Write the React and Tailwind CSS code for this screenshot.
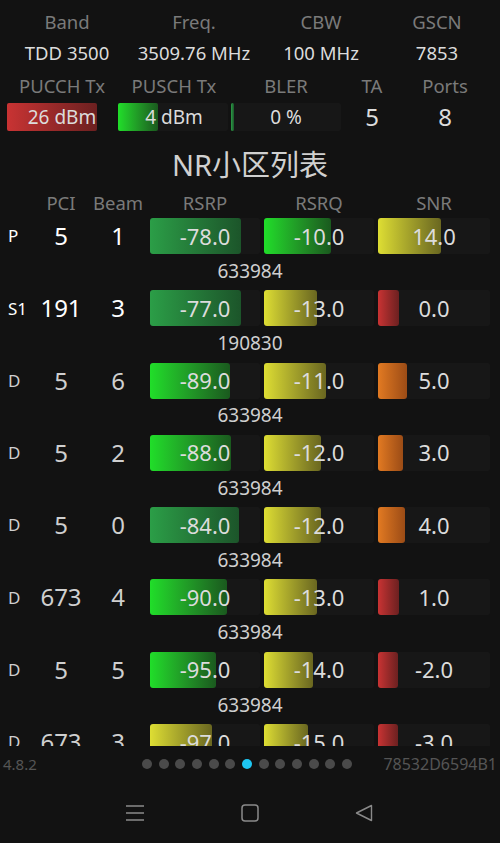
import React from 'react';

const FONT = { fontFamily: '"Noto Sans", "Noto Sans CJK SC", sans-serif' };

const FILLS = {
  dg: 'bg-gradient-to-r from-[#2b9e47] to-[#1c552a]',
  bg: 'bg-gradient-to-r from-[#20de29] to-[#1a5a1e]',
  ye: 'bg-gradient-to-r from-[#dede33] to-[#6a6720]',
  or: 'bg-gradient-to-r from-[#e27a22] to-[#9c4c16]',
  rd: 'bg-gradient-to-r from-[#c93333] to-[#6c2020]',
};

const cells = [
  { tag: 'P', pci: '5', beam: '1', bright: true, rsrp: ['-78.0', 91, 'dg'], rsrq: ['-10.0', 67, 'bg'], snr: ['14.0', 63, 'ye'], id: '633984' },
  { tag: 'S1', pci: '191', beam: '3', bright: true, rsrp: ['-77.0', 91, 'dg'], rsrq: ['-13.0', 53, 'ye'], snr: ['0.0', 21, 'rd'], id: '190830' },
  { tag: 'D', pci: '5', beam: '6', rsrp: ['-89.0', 80, 'bg'], rsrq: ['-11.0', 62, 'ye'], snr: ['5.0', 29, 'or'], id: '633984' },
  { tag: 'D', pci: '5', beam: '2', rsrp: ['-88.0', 81, 'bg'], rsrq: ['-12.0', 57, 'ye'], snr: ['3.0', 25, 'or'], id: '633984' },
  { tag: 'D', pci: '5', beam: '0', rsrp: ['-84.0', 89, 'dg'], rsrq: ['-12.0', 57, 'ye'], snr: ['4.0', 27, 'or'], id: '633984' },
  { tag: 'D', pci: '673', beam: '4', rsrp: ['-90.0', 77, 'bg'], rsrq: ['-13.0', 53, 'ye'], snr: ['1.0', 21, 'rd'], id: '633984' },
  { tag: 'D', pci: '5', beam: '5', rsrp: ['-95.0', 66, 'bg'], rsrq: ['-14.0', 49, 'ye'], snr: ['-2.0', 20, 'rd'], id: '633984' },
  { tag: 'D', pci: '673', beam: '3', rsrp: ['-97.0', 62, 'ye'], rsrq: ['-15.0', 44, 'ye'], snr: ['-3.0', 20, 'rd'], id: '633984' },
];

function Meter({ value, width, kind, className = 'w-[110px]' }) {
  return (
    <div className={`relative h-[36px] ${className} bg-[#171717] rounded-[2px]`}>
      <div className={`absolute left-0 top-0 bottom-0 rounded-[3px] ${FILLS[kind]}`} style={{ width }} />
      <span className="absolute inset-0 flex items-center justify-center text-[22px] text-[#dcdcdc]">{value}</span>
    </div>
  );
}

function CellRow({ c }) {
  const txt = c.bright ? 'text-white' : 'text-[#cfcfcf]';
  return (
    <div className="h-[72.3px] flex flex-col">
      <div className="flex items-center h-[36px]">
        <div className={`w-[36px] pl-[8px] text-[17px] ${txt}`}>{c.tag}</div>
        <div className={`w-[50px] text-center text-[24px] ${txt}`}>{c.pci}</div>
        <div className={`w-[64px] text-center text-[24px] ${txt}`}>{c.beam}</div>
        <Meter value={c.rsrp[0]} width={c.rsrp[1]} kind={c.rsrp[2]} />
        <div className="w-[4px]" />
        <Meter value={c.rsrq[0]} width={c.rsrq[1]} kind={c.rsrq[2]} />
        <div className="w-[4px]" />
        <Meter value={c.snr[0]} width={c.snr[1]} kind={c.snr[2]} className="w-[112px]" />
      </div>
      <div className="h-[34px] flex items-center justify-center text-[19px] text-[#cfcfcf]">{c.id}</div>
    </div>
  );
}

function TxCell({ fill, kind, value, barClass, colClass }) {
  return (
    <div className={`relative h-[28px] ${colClass}`}>
      <div className={`absolute top-0 bottom-0 bg-[#171717] rounded-[2px] ${barClass}`}>
        <div className={`absolute left-0 top-0 bottom-0 rounded-[2px] ${FILLS[kind]}`} style={{ width: fill }} />
      </div>
      <span className="absolute inset-0 flex items-center justify-center text-[19px] text-[#dcdcdc]">{value}</span>
    </div>
  );
}

export default function App() {
  return (
    <div className="w-[500px] h-[843px] bg-[#121212] flex flex-col overflow-hidden select-none" style={FONT}>
      <div className="h-[746px] overflow-hidden pt-[10px]">
        <div className="grid grid-cols-[134px_120px_134px_98px] text-center text-[18.5px] leading-[24px] text-[#7a7a7a]">
          <div>Band</div>
          <div>Freq.</div>
          <div>CBW</div>
          <div>GSCN</div>
        </div>
        <div className="grid grid-cols-[134px_120px_134px_98px] text-center text-[18.5px] leading-[24px] text-[#dcdcdc] mt-[7px]">
          <div>TDD 3500</div>
          <div>3509.76 MHz</div>
          <div>100 MHz</div>
          <div>7853</div>
        </div>
        <div className="grid grid-cols-[124px_100px_124px_48px_98px] text-center text-[18.5px] leading-[24px] text-[#7a7a7a] mt-[9px]">
          <div>PUCCH Tx</div>
          <div>PUSCH Tx</div>
          <div>BLER</div>
          <div>TA</div>
          <div>Ports</div>
        </div>
        <div className="flex items-center h-[28px] mt-[5px]">
          <TxCell fill={90} kind="rd" value="26 dBm" colClass="w-[124px]" barClass="left-[7px] w-[90px]" />
          <TxCell fill={40} kind="bg" value="4 dBm" colClass="w-[100px]" barClass="left-[-6px] w-[110px]" />
          <TxCell fill={3} kind="dg" value="0 %" colClass="w-[124px]" barClass="left-[7px] w-[110px]" />
          <div className="w-[48px] text-center text-[24px] leading-none text-[#dcdcdc]">5</div>
          <div className="w-[98px] text-center text-[24px] leading-none text-[#dcdcdc]">8</div>
        </div>
        <div className="text-center text-[29px] leading-[34px] text-[#d0d0d0] mt-[17px]">NR小区列表</div>
        <div className="flex text-[18.5px] leading-[24px] text-[#7a7a7a] mt-[9px]">
          <div className="w-[36px]" />
          <div className="w-[50px] text-center">PCI</div>
          <div className="w-[64px] text-center">Beam</div>
          <div className="w-[110px] text-center">RSRP</div>
          <div className="w-[4px]" />
          <div className="w-[110px] text-center">RSRQ</div>
          <div className="w-[4px]" />
          <div className="w-[112px] text-center">SNR</div>
        </div>
        <div className="mt-[3px]">
          {cells.map((c, i) => (
            <CellRow key={i} c={c} />
          ))}
        </div>
      </div>

      <div className="h-[36px] flex items-center px-[3px] text-[15px] text-[#555555]">
        <span className="flex-1 basis-0">4.8.2</span>
        <div className="flex items-center gap-[6.7px] mr-[6px]">
          {Array.from({ length: 13 }).map((_, i) => (
            <span key={i} className={`w-[10px] h-[10px] rounded-full ${i === 6 ? 'bg-[#1ec6f2]' : 'bg-[#4a4a4a]'}`} />
          ))}
        </div>
        <span className="flex-1 basis-0 text-right text-[16px]">78532D6594B1</span>
      </div>

      <div className="h-[61px] flex items-center justify-center gap-[96px] pr-[2px]">
        <svg width="20" height="18" viewBox="0 0 20 18" fill="none" stroke="#8a8a8a" strokeWidth="1.4">
          <path d="M1 2h18M1 9h18M1 16h18" />
        </svg>
        <svg width="18" height="18" viewBox="0 0 18 18" fill="none" stroke="#8a8a8a" strokeWidth="1.5">
          <rect x="1" y="1" width="16" height="16" rx="3" />
        </svg>
        <svg width="18" height="18" viewBox="0 0 18 18" fill="none" stroke="#8a8a8a" strokeWidth="1.4" strokeLinejoin="round">
          <path d="M1.5 9L16.5 1.5V16.5Z" />
        </svg>
      </div>
    </div>
  );
}
